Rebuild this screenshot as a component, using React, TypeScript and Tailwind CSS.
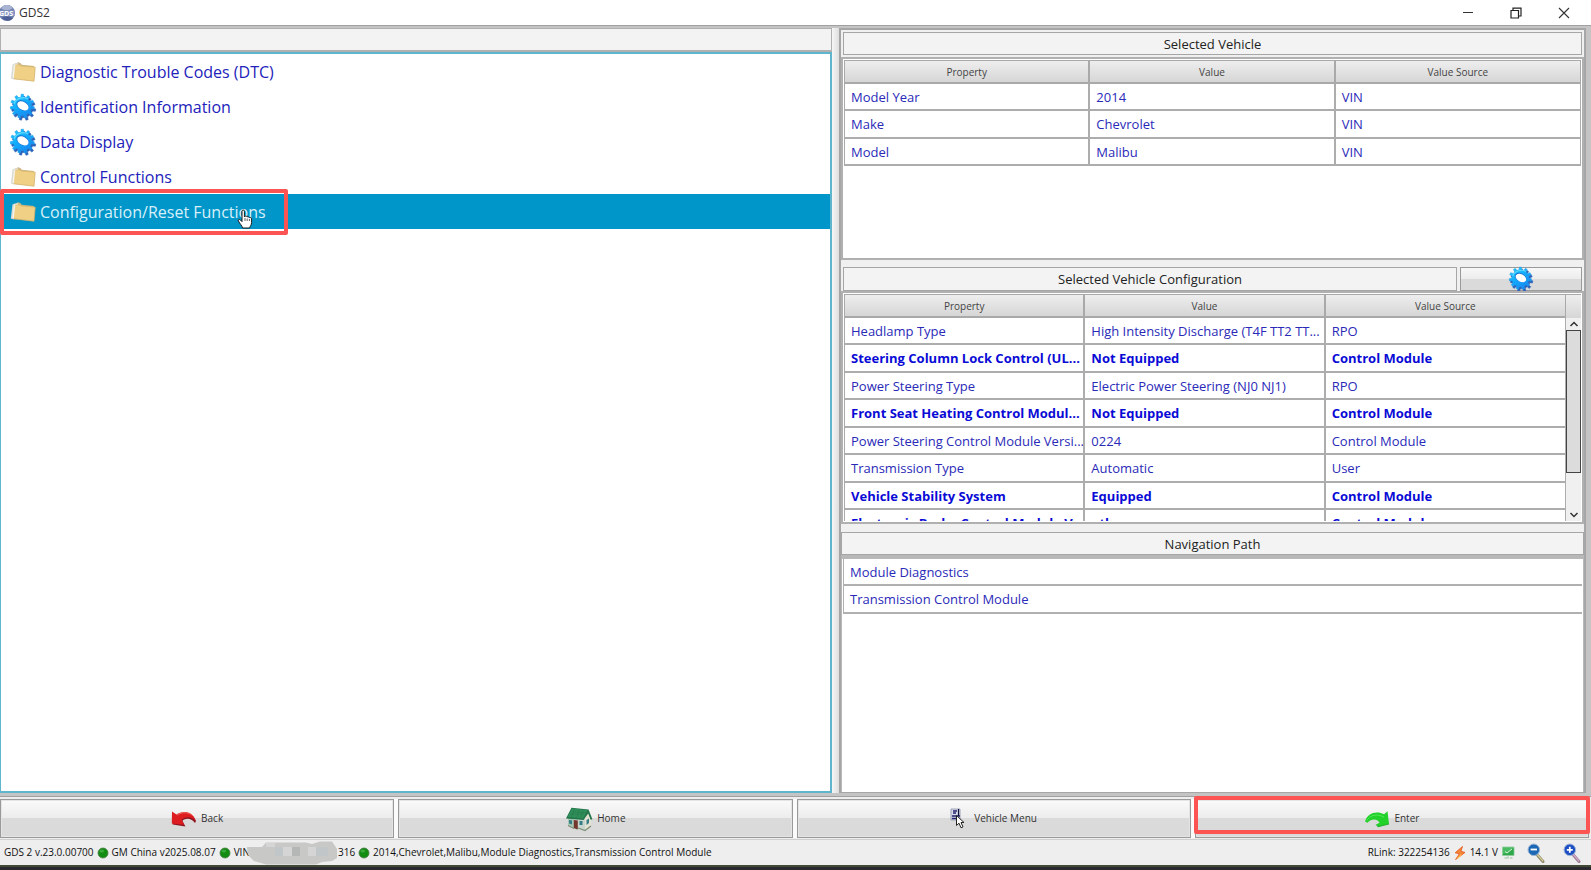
import React, { useState } from "react";

const gearPath = (() => {
  const teeth = 11;
  const points: string[] = [];
  for (let i = 0; i < teeth; i++) {
    const base = (i / teeth) * Math.PI * 2;
    const step = (Math.PI * 2) / teeth;
    const corners: [number, number][] = [
      [9.2, 0],
      [12, 0.08],
      [12, 0.42],
      [9.2, 0.5],
    ];
    corners.forEach(([r, f]) => {
      const a = base + step * f;
      points.push(`${(14 + r * Math.cos(a)).toFixed(2)} ${(14 + r * Math.sin(a)).toFixed(2)}`);
    });
  }
  return `M${points.join("L")}Z`;
})();

function GearIcon({ id, className }: { id: string; className: string }) {
  return (
    <svg viewBox="0 0 28 28" className={className} aria-hidden="true">
      <defs>
        <linearGradient id={id} x1="0" y1="0" x2="0.7" y2="1">
          <stop offset="0" stopColor="#27d0fe" />
          <stop offset="0.5" stopColor="#12adfc" />
          <stop offset="1" stopColor="#1686f2" />
        </linearGradient>
      </defs>
      <path d={gearPath} fill="#2c62b8" stroke="#2c62b8" strokeLinejoin="round" strokeWidth="0.6" transform="translate(0.7 1.4)" />
      <path d={gearPath} fill={`url(#${id})`} stroke="#1aa0ee" strokeLinejoin="round" strokeWidth="0.6" transform="translate(-0.7 -0.8)" />
      <path d="M5 11C7 5 15 3 19 6" fill="none" stroke="#6fe3ff" strokeWidth="1.2" opacity="0.8" />
      <ellipse cx="13.6" cy="12.4" rx="6.6" ry="4.6" transform="rotate(30 13.6 12.4)" fill="#1673d2" />
      <ellipse cx="13.9" cy="12.9" rx="6.1" ry="4" transform="rotate(30 13.9 12.9)" fill="#ffffff" />
    </svg>
  );
}

function FolderIcon() {
  return (
    <svg viewBox="0 0 28 24" className="h-6 w-7 shrink-0" aria-hidden="true">
      <path d="M3.5 4.5L6 3.5 5 19.5 1.8 18.5Z" fill="#deded9" />
      <path d="M5 4.2L9.5 2.2 12 3.4 12.6 4.8 25 6 24.5 9 5 9Z" fill="#c9b684" />
      <path d="M4.5 4.6L9 3 8.4 19 3 18.2Z" fill="#f4f3ee" stroke="#cfccbf" strokeWidth="0.5" />
      <path d="M6.2 5.2L10 4.6 12.2 6 26.2 7.2 25 21.2 4.8 18.8Z" fill="#efd085" />
      <path d="M6.2 5.2L10 4.6 12.2 6 26.2 7.2" fill="none" stroke="#dcb968" strokeWidth="0.7" />
      <path d="M26.2 7.2L25 21.2 4.8 18.8" fill="none" stroke="#d3b36c" strokeWidth="0.8" />
    </svg>
  );
}

function AppLogo() {
  return (
    <svg viewBox="0 0 16 18" className="h-[18px] w-4" aria-hidden="true">
      <circle cx="7" cy="9" r="8" fill="#6d7fb0" />
      <path d="M1 4C5-1 11 1 13 4C9 7 4 7 1 4Z" fill="#a9b4d3" />
      <path d="M2 14C6 18 11 17 13 14C9 12 5 12 2 14Z" fill="#4d5e94" />
      <path d="M0 6.5H14.5V12H0Z" fill="#8a98c2" />
      <text x="-1" y="11.6" fontSize="7" fontWeight="700" fill="#ffffff" fontFamily="Open Sans, sans-serif">GDS</text>
    </svg>
  );
}

function BackIcon() {
  return (
    <svg viewBox="0 0 26 18" className="h-[18px] w-[26px]" aria-hidden="true">
      <path d="M1 2L5.4 5C11 0.6 21.5 1 24.6 10.5L23.6 12.5C19.5 7.3 14.8 7.3 11 10.2L14 15.8 1.3 13.8Z" fill="#8f1420" transform="translate(0.4 0.6)" />
      <path d="M1 1.5L5.4 4.6C11 0.2 21.5 0.6 24.4 10.2C19.5 6 14.8 6.6 10.6 9.4L13 14.8 0.8 13.4Z" fill="#dd1c1f" />
      <path d="M6 5.2C11 1.6 18 2 22 6" stroke="#f36a62" strokeWidth="0.9" fill="none" />
    </svg>
  );
}

function EnterIcon() {
  return (
    <svg viewBox="0 0 26 18" className="h-[18px] w-[26px]" aria-hidden="true">
      <path d="M25 14L14 16.8 12.2 14.5 15.5 12.8C13 8.5 7.5 8.5 3.5 12.8L1 11.5C3.5 2.5 13 0.5 20 4.2L23.5 1.2Z" fill="#23d12b" />
      <path d="M2.5 10.5C6 5 13 3.5 20 7" stroke="#4fe857" strokeWidth="1" fill="none" />
      <path d="M25 14L14 16.8 12.2 14.5" stroke="#14a51d" strokeWidth="0.8" fill="none" />
    </svg>
  );
}

function HomeIcon() {
  return (
    <svg viewBox="0 0 28 26" className="h-[26px] w-7" aria-hidden="true">
      <path d="M3 10L12 11V24L3 19.5Z" fill="#a9c7b6" />
      <path d="M9 11L21 12V24.5L9 22Z" fill="#c9d6cd" />
      <path d="M20 12L23.5 6 26 12V20L20 24.5Z" fill="#e4e2d3" />
      <path d="M1.2 12L6.5 1.8 23.5 3.5 27.4 13.3 25.6 13.8 23.2 7.5 18.5 14 1.2 12.6Z" fill="#24744a" />
      <path d="M2.5 11L7 2.6 22.5 4.2 18 12.6Z" fill="#2f8f5a" />
      <path d="M5 8H19M7 5.5L21 6.8M9 3.5L6.5 11M14 4L11.5 12M18 4.5L15.5 12" stroke="#26794b" strokeWidth="0.6" />
      <path d="M8.8 14L12.8 14.5V23.5L8.8 22Z" fill="#74352d" />
      <path d="M4 14L7 14.3V18.5L4 17.5ZM14.5 15H17.5V19H14.5ZM21.5 14L24 12.5V17L21.5 19Z" fill="#377e86" />
      <path d="M3 19.5L9 22.5M13 22L20 24.5 26 20" stroke="#7f8f78" strokeWidth="1.2" fill="none" />
    </svg>
  );
}

function MenuIcon() {
  return (
    <svg viewBox="0 0 16 22" className="mr-1 h-[22px] w-4" aria-hidden="true">
      <path d="M1 1H10V12H1Z" fill="#d9dceb" stroke="#8a8fa8" strokeWidth="0.8" />
      <path d="M3 3H7M3 5H6M2 8H10M2 10.5H7" stroke="#23236e" strokeWidth="1.5" />
      <path d="M8.5 1V8" stroke="#11113a" strokeWidth="1.2" />
      <path d="M6.5 7.5V17.5L9 15.2 11 19.8 13 18.9 11 14.5H14Z" fill="#ffffff" stroke="#222222" strokeWidth="1" />
    </svg>
  );
}

function HandCursor() {
  return (
    <svg viewBox="0 0 16 20" className="pointer-events-none absolute top-[15px] left-[236px] h-5 w-4" aria-hidden="true">
      <path
        d="M5 2.2C5 0.6 7.4 0.6 7.4 2.2V8L8.2 7.2C9 6.8 9.9 7.2 10 8C10.7 7.4 12 7.7 12.3 8.7C13.2 8.2 14.6 8.7 14.6 10V13.5C14.6 16 13 17 12.6 19H5.6C5 16.6 3 15 1.4 12C0.8 10.6 2.3 9.9 3.3 10.9L5 12.6Z"
        fill="#ffffff"
        stroke="#1d1d1d"
        strokeWidth="1"
      />
      <path d="M8 9V12M10.2 9.5V12M12.4 10V12" stroke="#1d1d1d" strokeWidth="0.7" />
    </svg>
  );
}

function StatusDot() {
  return (
    <svg viewBox="0 0 12 12" className="size-3 shrink-0" aria-hidden="true">
      <circle cx="6" cy="6" r="5" fill="#128d12" stroke="#4a7a45" strokeWidth="0.8" />
      <ellipse cx="4.8" cy="4" rx="2.4" ry="1.6" fill="#3aa83a" />
    </svg>
  );
}

function BoltIcon() {
  return (
    <svg viewBox="0 0 12 14" className="h-3.5 w-3" aria-hidden="true">
      <path d="M8.5 0.5L1.2 6.8 5.4 7.8 1.6 13.5 11 6.4 6.8 5.4Z" fill="#f5893a" stroke="#e8642c" strokeWidth="1" />
      <path d="M7.5 8.5L3 12.5" stroke="#f9b54a" strokeWidth="1.2" />
    </svg>
  );
}

function MonitorIcon() {
  return (
    <svg viewBox="0 0 13 13" className="size-[13px]" aria-hidden="true">
      <path d="M0.5 1H12V9.5H0.5Z" fill="#49bd62" stroke="#8fc99b" strokeWidth="0.8" />
      <path d="M1 8L6 6 11.5 2V9H1Z" fill="#2fa84c" />
      <path d="M3 5.5L5 7 10 3" stroke="#d6f2da" strokeWidth="1" fill="none" />
      <path d="M2.5 12H5M6 10.5V12.5M8 12H10.5" stroke="#8fbf97" strokeWidth="1.2" />
    </svg>
  );
}

function MagnifierIcon({ plus }: { plus?: boolean }) {
  return (
    <svg viewBox="0 0 18 20" className="h-5 w-[18px]" aria-hidden="true">
      <path d="M9.5 11L16 18.5" stroke={plus ? "#9a7f96" : "#8f8a6c"} strokeWidth="3" strokeLinecap="round" />
      <path d="M9.5 10.5L15.8 17.8" stroke={plus ? "#d9a9cc" : "#d8cf9a"} strokeWidth="1.2" strokeLinecap="round" />
      <circle cx="6.8" cy="6.8" r="5.8" fill={plus ? "#1d4fc4" : "#1c68b4"} stroke="#9fb6d6" strokeWidth="1" />
      <path d={plus ? "M3.8 6.8H9.8M6.8 3.8V9.8" : "M3.6 6.5H10"} stroke="#ffffff" strokeWidth="1.8" />
    </svg>
  );
}

function Redaction() {
  return (
    <svg viewBox="0 0 92 24" className="-ml-1 h-6 w-[92px] shrink-0" aria-hidden="true">
      <path d="M1 6L16 6 20 1.5H60L66 3 74 0.5H86L91 8V17L86 20 76 21 70 23.5H20L8 20 2 14Z" fill="#c8c8c7" />
      <path d="M20 2H29V6H20ZM37 6H46V15H37ZM62 6H70V15H62Z" fill="#d5d5d5" />
      <path d="M46 6H54V15H46Z" fill="#b5b6b6" />
      <path d="M29 6H37V15H29ZM70 6H82V15H70Z" fill="#c1c6c8" />
    </svg>
  );
}

const menuItems = [
  { label: "Diagnostic Trouble Codes (DTC)", icon: "folder" },
  { label: "Identification Information", icon: "gear" },
  { label: "Data Display", icon: "gear" },
  { label: "Control Functions", icon: "folder" },
  { label: "Configuration/Reset Functions", icon: "folder" },
];

type Row = { cells: [string, string, string]; bold?: boolean };

const vehicleRows: Row[] = [
  { cells: ["Model Year", "2014", "VIN"] },
  { cells: ["Make", "Chevrolet", "VIN"] },
  { cells: ["Model", "Malibu", "VIN"] },
];

const configurationRows: Row[] = [
  { cells: ["Headlamp Type", "High Intensity Discharge (T4F TT2 TT...", "RPO"] },
  { cells: ["Steering Column Lock Control (UL...", "Not Equipped", "Control Module"], bold: true },
  { cells: ["Power Steering Type", "Electric Power Steering (NJ0 NJ1)", "RPO"] },
  { cells: ["Front Seat Heating Control Modul...", "Not Equipped", "Control Module"], bold: true },
  { cells: ["Power Steering Control Module Versi...", "0224", "Control Module"] },
  { cells: ["Transmission Type", "Automatic", "User"] },
  { cells: ["Vehicle Stability System", "Equipped", "Control Module"], bold: true },
  { cells: ["Electronic Brake Control Module V...", "other", "Control Module"], bold: true },
];

function PropertyTable({ rows, label }: { rows: Row[]; label: string }) {
  return (
    <table aria-label={label} className="w-full table-fixed border-separate border-spacing-0 border-l border-[#a9a9a9]">
      <thead>
        <tr className="h-6">
          {["Property", "Value", "Value Source"].map((name) => (
            <th
              key={name}
              scope="col"
              className="border-t border-r-2 border-b-2 border-[#a9a9a9] bg-linear-to-b from-[#eeeeee] to-[#d6d6d6] p-0 text-[10px] leading-4 font-normal text-[#444444] last:border-r"
            >
              {name}
            </th>
          ))}
        </tr>
      </thead>
      <tbody>
        {rows.map((row) => (
          <tr key={row.cells[0]} className="odd:h-[27px] even:h-7">
            {row.cells.map((cell, i) => (
              <td
                key={i}
                className={`overflow-hidden border-r-2 border-b-2 border-[#adadad] py-0 pr-0 pl-1.5 text-[13px] leading-5 whitespace-nowrap last:border-r ${
                  row.bold ? "font-bold text-[#0a0ad6]" : "text-[#2a2ab8]"
                }`}
              >
                {cell}
              </td>
            ))}
          </tr>
        ))}
      </tbody>
    </table>
  );
}

function PanelTitle({ children }: { children: React.ReactNode }) {
  return (
    <h2 className="flex min-h-[23px] flex-1 items-center justify-center border border-[#a6a6a6] bg-[#f3f3f3] text-[13px] leading-5 text-[#222222]">
      {children}
    </h2>
  );
}

function ActionButton({ label, children, marked }: { label: string; children: React.ReactNode; marked?: boolean }) {
  return (
    <button
      type="button"
      className="relative flex h-[39px] items-center justify-center gap-1 border border-[#9a9a9a] bg-linear-to-b from-[#fafafa] from-0% via-[#ececec] via-50% to-[#dadada] to-50% text-[10px] text-[#333333] shadow-[inset_0_0_0_1px_#e4e4e4]"
    >
      {children}
      {label}
      {marked && <span className="absolute -top-1 -right-0.5 bottom-[3px] -left-0.5 rounded-xs border-4 border-[#fc5353]" />}
    </button>
  );
}

export default function App() {
  const [selected, setSelected] = useState(4);

  return (
    <div className="flex min-h-screen flex-col bg-[#eeeeee] font-['Open_Sans','Noto_Sans',sans-serif]">
      <header className="flex h-[25px] items-center bg-white">
        <AppLogo />
        <h1 className="ml-[3px] flex-1 text-xs text-[#333333]">GDS2</h1>
        <button type="button" aria-label="Minimize" className="flex w-12 justify-center">
          <svg viewBox="0 0 12 12" className="size-3"><path d="M1 5.5H11" stroke="#333333" /></svg>
        </button>
        <button type="button" aria-label="Restore" className="flex w-12 justify-center">
          <svg viewBox="0 0 12 12" className="size-3" fill="none" stroke="#222222" strokeWidth="1.2">
            <path d="M1 3.5H8.5V11H1Z" />
            <path d="M3 3.5V1.2H11V9H8.5" />
          </svg>
        </button>
        <button type="button" aria-label="Close" className="mr-[3px] flex w-12 justify-center">
          <svg viewBox="0 0 12 12" className="size-3"><path d="M1 1L11 11M11 1L1 11" stroke="#333333" strokeWidth="1.1" /></svg>
        </button>
      </header>

      <main className="grid flex-1 grid-cols-[minmax(0,832fr)_7px_minmax(0,747fr)] border-t border-b border-[#a0a0a0] bg-[#c4c4c4] pt-0.5 pr-[5px] pb-[3px]">
        <nav aria-label="Functions" className="flex flex-col">
          <div className="h-6 border border-b-2 border-[#b0b0b0] bg-[#f3f3f3]" />
          <ul className="flex-1 border-2 border-l border-[#5fb6cc] bg-white">
            {menuItems.map((item, i) => (
              <li key={item.label}>
                <button
                  type="button"
                  onClick={() => setSelected(i)}
                  className={`relative flex h-[35px] w-full items-center gap-[3px] pl-2 text-left text-base ${
                    i === selected ? "bg-[#0096c9] text-[#d8f0fa]" : "text-[#2222bb]"
                  }`}
                >
                  {item.icon === "folder" ? <FolderIcon /> : <GearIcon id={`gear-${i}`} className="size-7 shrink-0" />}
                  {item.label}
                  {i === 4 && (
                    <>
                      <span className="absolute -top-[5px] -left-px h-[46px] w-72 rounded-xs border-4 border-[#fc5353]" />
                      <HandCursor />
                    </>
                  )}
                </button>
              </li>
            ))}
          </ul>
        </nav>

        <div className="bg-linear-to-r from-[#f6f6f6] to-[#dedede]" />

        <div className="flex flex-col border-t-2 border-r-2 border-b border-l-2 border-[#a6a6a6] bg-[#f0f0f0]">
          <section className="flex h-[230px] flex-col gap-0.5 pt-0.5">
            <div className="flex px-0.5"><PanelTitle>Selected Vehicle</PanelTitle></div>
            <div className="flex-1 border-2 border-[#b0b0b0] bg-white p-px">
              <PropertyTable rows={vehicleRows} label="Selected Vehicle" />
            </div>
          </section>

          <section className="mt-[7px] flex h-[257px] flex-col">
            <div className="flex gap-[3px] px-0.5">
              <PanelTitle>Selected Vehicle Configuration</PanelTitle>
              <button
                type="button"
                aria-label="Edit configuration"
                className="flex h-6 w-[122px] items-center justify-center border border-[#9a9a9a] bg-linear-to-b from-[#f8f8f8] from-0% via-[#ececec] via-50% to-[#dadada] to-50%"
              >
                <GearIcon id="gear-edit" className="size-[26px]" />
              </button>
            </div>
            <div className="flex min-h-0 flex-1 border-2 border-[#b0b0b0] bg-white p-px">
              <div className="min-w-0 flex-1 overflow-hidden">
                <PropertyTable rows={configurationRows} label="Selected Vehicle Configuration" />
              </div>
              <div className="flex w-[15px] flex-col bg-[#f0f0f0]">
                <div className="h-6 border-t border-[#a9a9a9] bg-linear-to-b from-[#eeeeee] to-[#d6d6d6]" />
                <button type="button" aria-label="Scroll up" className="flex h-3 items-center justify-center">
                  <svg viewBox="0 0 10 6" className="h-1.5 w-2.5" fill="none" stroke="#333333" strokeWidth="1.5"><path d="M1.5 5L5 1.5 8.5 5" /></svg>
                </button>
                <div className="h-[143px] border border-[#444444] bg-[#dcdcdc]" />
                <button type="button" aria-label="Scroll down" className="mt-auto flex h-3 items-center justify-center">
                  <svg viewBox="0 0 10 6" className="h-1.5 w-2.5" fill="none" stroke="#333333" strokeWidth="1.5"><path d="M1.5 1L5 4.5 8.5 1" /></svg>
                </button>
              </div>
            </div>
          </section>

          <section className="mt-2 flex flex-1 flex-col">
            <div className="flex"><PanelTitle>Navigation Path</PanelTitle></div>
            <ol className="flex-1 border-t-4 border-r border-l border-[#b8b8b8] bg-white px-px text-[13px] leading-5 text-[#2a2ab8]">
              {["Module Diagnostics", "Transmission Control Module"].map((step) => (
                <li key={step} className="flex h-[27px] items-center border-b-2 border-l border-[#b0b0b0] pl-1.5 even:h-7">
                  {step}
                </li>
              ))}
            </ol>
          </section>
        </div>
      </main>

      <div className="mt-0.5 mr-0.5 grid grid-cols-4 gap-1 bg-[#fbfbfb]">
        <ActionButton label="Back"><BackIcon /></ActionButton>
        <ActionButton label="Home"><HomeIcon /></ActionButton>
        <ActionButton label="Vehicle Menu"><MenuIcon /></ActionButton>
        <ActionButton label="Enter" marked><EnterIcon /></ActionButton>
      </div>

      <footer className="mt-px flex h-[26px] items-center border-t border-[#d0d0d0] pr-2.5 pl-1 text-[10px] text-[#111111]">
        <div className="flex flex-1 items-center gap-[3px]">
          <span>GDS 2 v.23.0.00700</span>
          <StatusDot />
          <span>GM China v2025.08.07</span>
          <StatusDot />
          <div className="flex items-center">
            <span>VIN</span>
            <Redaction />
            <span>316</span>
          </div>
          <StatusDot />
          <span>2014,Chevrolet,Malibu,Module Diagnostics,Transmission Control Module</span>
        </div>
        <div className="flex items-center gap-1">
          <span>RLink: 322254136</span>
          <BoltIcon />
          <span>14.1 V</span>
          <MonitorIcon />
          <button type="button" aria-label="Zoom out" className="ml-2"><MagnifierIcon /></button>
          <button type="button" aria-label="Zoom in" className="ml-3.5"><MagnifierIcon plus /></button>
        </div>
      </footer>
      <div className="h-[5px] border-t-2 border-[#414a35] bg-[#29292f]" />
    </div>
  );
}
